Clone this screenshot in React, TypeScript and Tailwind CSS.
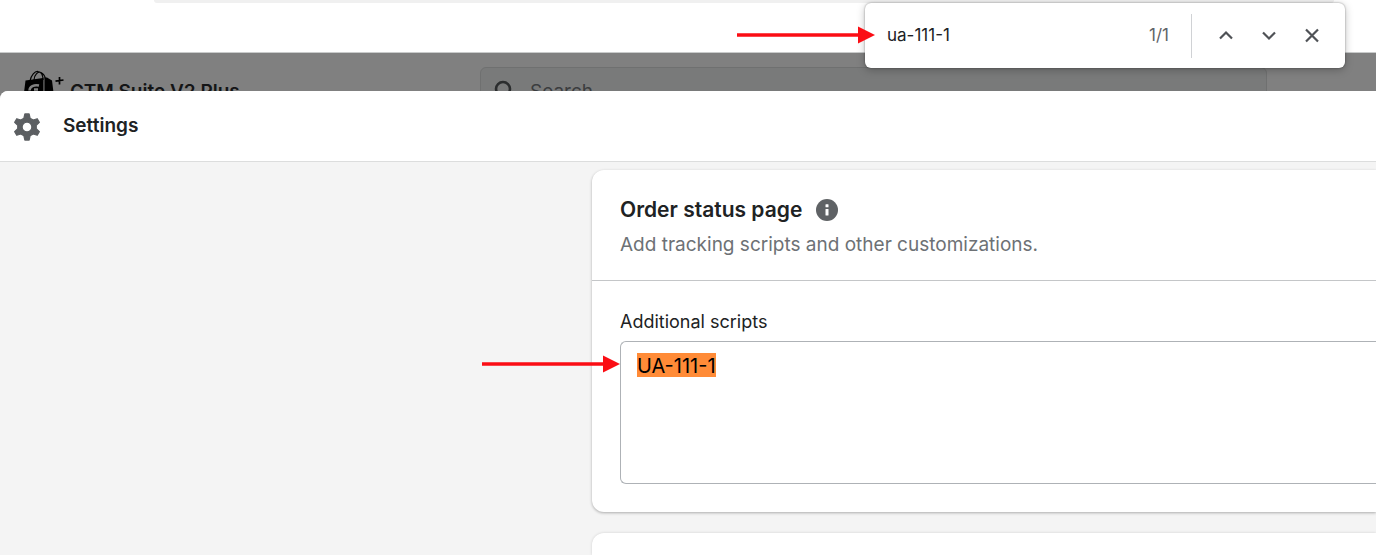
import React from "react";

const ShopLogo = () => (
  <svg viewBox="0 0 44 36" className="h-9 w-11" fill="none" aria-hidden="true">
    <path d="M3.500 11.500 L21 9 L21.500 36 H0.500 Z" fill="#000" />
    <path d="M21.500 8.500 L25 8.500 L30 11.500 L33 36 H22 Z" fill="#000" />
    <path d="M22.300 9 V36" stroke="#808080" strokeWidth="0.600" />
    <path
      d="M8 12 C9 6 13 2 16 2.500 C20 3 21 7 21 11 M12 11 C12 6 16 2 19 3.500 C22 5 23 7 23.500 10"
      stroke="#000"
      strokeWidth="1.200"
    />
    <path
      d="M17 16.500 C12 15.500 7.500 17.500 7.500 21.500 M12 20.500 H16"
      stroke="#808080"
      strokeWidth="2.400"
    />
    <path d="M37.500 8 V15.500 M33.500 12.200 L41.500 11" stroke="#000" strokeWidth="1.700" />
  </svg>
);

const GearIcon = () => (
  <svg viewBox="0 0 20 20" className="h-7 w-7" fill="#5c5f62" aria-hidden="true">
    <path
      fillRule="evenodd"
      d="M8.500 0.700 H11.500 L12.200 3.700 L14.400 5 L17.300 4.100 L18.800 6.700 L16.600 8.800 V11.200 L18.800 13.300 L17.300 15.900 L14.400 15 L12.200 16.300 L11.500 19.300 H8.500 L7.800 16.300 L5.600 15 L2.700 15.900 L1.200 13.300 L3.400 11.200 V8.800 L1.200 6.700 L2.700 4.100 L5.600 5 L7.800 3.700 Z M10 6.500 A3.500 3.500 0 1 0 10 13.500 A3.500 3.500 0 1 0 10 6.500 Z"
      stroke="#5c5f62"
      strokeWidth="0.900"
      strokeLinejoin="round"
    />
  </svg>
);

const InfoIcon = () => (
  <svg viewBox="0 0 22 22" className="h-[22px] w-[22px]" aria-hidden="true">
    <circle cx="11" cy="11" r="11" fill="#5f6265" />
    <rect x="9.500" y="5.300" width="3" height="3" rx="0.500" fill="#fff" />
    <rect x="9.500" y="10" width="3" height="6.500" rx="0.500" fill="#fff" />
  </svg>
);

const SearchIcon = () => (
  <svg viewBox="0 0 24 24" className="h-6 w-6" fill="none" aria-hidden="true">
    <circle cx="10" cy="9" r="7" stroke="#2b2d2e" strokeWidth="2.600" />
    <path d="M15.500 14.500 L21 20" stroke="#2b2d2e" strokeWidth="2.600" />
  </svg>
);

const Arrow = () => (
  <svg viewBox="0 0 138 18" className="h-[18px] w-[138px]" aria-hidden="true">
    <path d="M0 9 H123" stroke="#fb0d14" strokeWidth="3.400" />
    <path d="M121 0.500 L138 9 L121 17.500 Z" fill="#fb0d14" />
  </svg>
);

const findActions = [
  { label: "Previous match", d: "M4 12.500 L10 6.500 L16 12.500" },
  { label: "Next match", d: "M4 6.500 L10 12.500 L16 6.500" },
  { label: "Close find bar", d: "M4 3.500 L16 15.500 M16 3.500 L4 15.500" },
];

const FindBar = () => (
  <div
    role="search"
    className="absolute top-[3px] right-[31px] z-20 flex h-[65px] w-[480px] items-center rounded-md bg-white pr-3 pl-[22px] shadow-[0_0_2px_rgba(0,0,0,0.4),0_2px_8px_rgba(0,0,0,0.25)]"
  >
    <div className="absolute top-[23px] right-full -mr-[10px]">
      <Arrow />
    </div>
    <input
      type="text"
      aria-label="Find in page"
      defaultValue="ua-111-1"
      className="min-w-0 flex-1 bg-transparent text-[17px] text-[#202124] outline-none"
    />
    <span className="mr-[22px] text-[17px] text-[#5f6368]">1/1</span>
    <span className="mr-3 h-11 w-px bg-[#d0d2d5]" />
    <div className="flex">
      {findActions.map((action) => (
        <button
          key={action.label}
          type="button"
          aria-label={action.label}
          className="flex h-11 w-[43px] items-center justify-center"
        >
          <svg viewBox="0 0 20 20" className="h-5 w-5" fill="none">
            <path d={action.d} stroke="#4f5256" strokeWidth="2.200" />
          </svg>
        </button>
      ))}
    </div>
  </div>
);

const AdminBar = () => (
  <div className="flex h-[38px] items-start bg-[#808080] pl-[22px]">
    <div className="flex w-[458px] shrink-0 items-start gap-1 pt-4">
      <ShopLogo />
      <span className="pt-2.5 text-[19px] leading-[26px] font-semibold text-[#141516]">
        GTM Suite V2 Plus
      </span>
    </div>
    <label className="mt-3.5 mr-[109px] flex h-[50px] flex-1 items-center gap-[13px] rounded-md border border-[#6f7070] bg-[#797a7a] pl-3">
      <SearchIcon />
      <input
        type="text"
        aria-label="Search"
        placeholder="Search"
        className="min-w-0 flex-1 bg-transparent text-[19px] text-[#3b3d3f] outline-none placeholder:text-[#3b3d3f]"
      />
    </label>
  </div>
);

const OrderStatusCard = () => (
  <section className="rounded-l-xl bg-white shadow-[0_1px_3px_rgba(0,0,0,0.3)]">
    <div className="border-b border-[#c4c6c8] px-7 pt-[25px] pb-5">
      <div className="flex items-center gap-3.5">
        <h2 className="text-[21px] leading-[30px] font-semibold text-[#202223]">
          Order status page
        </h2>
        <InfoIcon />
      </div>
      <p className="mt-[5px] text-[19px] leading-[30px] text-[#6d7175]">
        Add tracking scripts and other customizations.
      </p>
    </div>
    <div className="pt-[26px] pb-7 pl-7">
      <label htmlFor="scripts" className="block text-lg leading-[30px] text-[#202223]">
        Additional scripts
      </label>
      <div className="relative mt-1 h-[143px]">
        <span className="absolute top-3 left-[17px] h-6 w-[79px] bg-[#ff8b37]" />
        <div className="absolute top-3.5 right-full">
          <Arrow />
        </div>
        <textarea
          id="scripts"
          defaultValue="UA-111-1"
          className="relative block h-full w-full resize-none rounded-l-md border border-r-0 border-[#aeb2b6] bg-transparent px-4 py-3 text-xl leading-6 text-black outline-none"
        />
      </div>
    </div>
  </section>
);

const App = () => {
  return (
    <div className="relative flex min-h-screen flex-col overflow-hidden bg-[#808080] font-['Inter',sans-serif]">
      <div className="h-[53px] border-b border-[#c9cbcb] bg-white pr-[42px] pl-[154px]">
        <div className="h-[3px] rounded-b bg-[#f0f0f0]" />
      </div>
      <FindBar />
      <AdminBar />
      <div className="relative flex flex-1 flex-col overflow-hidden rounded-tl-lg bg-[#f4f4f4]">
        <header className="flex h-[71px] items-center gap-[22px] border-b border-[#dcdddd] bg-white pt-px pl-[13px]">
          <GearIcon />
          <h1 className="text-[19px] font-semibold text-[#202223]">Settings</h1>
        </header>
        <main className="flex flex-1 flex-col gap-[21px] pt-2 pl-[592px]">
          <OrderStatusCard />
          <section className="flex-1 rounded-tl-xl bg-white shadow-[0_0_3px_rgba(0,0,0,0.15)]" />
        </main>
      </div>
    </div>
  );
};

export default App;
